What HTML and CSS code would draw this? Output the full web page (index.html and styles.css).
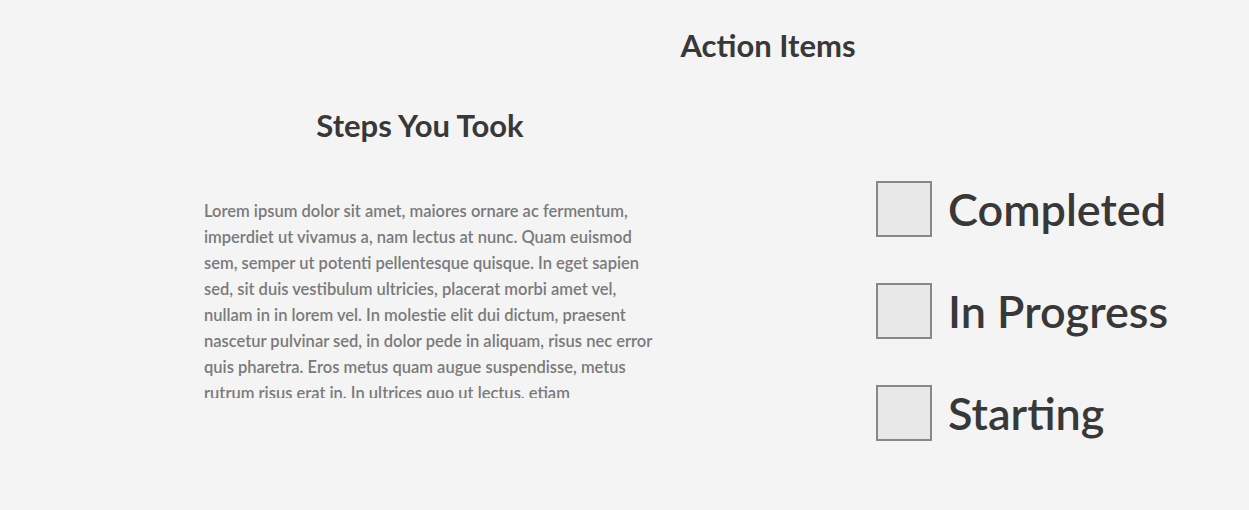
FILE: index.html
```html
<!DOCTYPE html>
<html lang="en">
<head>
<meta charset="utf-8">
<title>Action Items</title>
<link rel="stylesheet" href="styles.css">
</head>
<body>
<div class="page">
  <header class="header">
    <h1 class="title">Action Items</h1>
  </header>
  <main class="columns">
    <section class="steps">
      <h2 class="steps-title">Steps You Took</h2>
      <div class="steps-text">
        <p>Lorem ipsum dolor sit amet, maiores ornare ac fermentum, imperdiet ut vivamus a, nam lectus at nunc. Quam euismod sem, semper ut potenti pellentesque quisque. In eget sapien sed, sit duis vestibulum ultricies, placerat morbi amet vel, nullam in in lorem vel. In molestie elit dui dictum, praesent nascetur pulvinar sed, in dolor pede in aliquam, risus nec error quis pharetra. Eros metus quam augue suspendisse, metus rutrum risus erat in.  In ultrices quo ut lectus, etiam vestibulum urna a est, pretium luctus euismod nisl, pellentesque turpis hac ridiculus massa.</p>
      </div>
    </section>
    <section class="status">
      <ul class="status-list">
        <li class="status-item"><span class="box"></span><span class="label">Completed</span></li>
        <li class="status-item"><span class="box"></span><span class="label">In Progress</span></li>
        <li class="status-item"><span class="box"></span><span class="label">Starting</span></li>
      </ul>
    </section>
  </main>
</div>
</body>
</html>
```
FILE: styles.css
```css
html, body {
  margin: 0;
  padding: 0;
  background: #f4f4f4;
}
body {
  font-family: Lato, "Open Sans", "Noto Sans", sans-serif;
  color: #383838;
}
.page {
  width: 1249px;
  height: 510px;
  overflow: hidden;
}
.header {
  padding-left: 287px;
  text-align: center;
  padding-top: 27px;
}
.title {
  margin: 0;
  font-size: 31px;
  font-weight: 700;
  line-height: 36px;
  color: #383838;
}
.columns {
  display: flex;
}
.steps {
  padding-left: 204px;
  width: 449px;
  padding-top: 44px;
}
.steps-title {
  margin: 0 17px 0 0;
  text-align: center;
  font-size: 31px;
  font-weight: 700;
  line-height: 36px;
  color: #383838;
}
.steps-text {
  margin-top: 55px;
  height: 200px;
  overflow: hidden;
}
.steps-text p {
  margin: 0;
  font-size: 16.5px;
  line-height: 26px;
  color: #7a7a7a;
  font-weight: 600;
}
.status {
  margin-left: 223px;
  padding-top: 118px;
}
.status-list {
  list-style: none;
  margin: 0;
  padding: 0;
  display: flex;
  flex-direction: column;
  gap: 46px;
}
.status-item {
  display: flex;
  align-items: center;
  gap: 16px;
  height: 56px;
}
.box {
  width: 52px;
  height: 52px;
  border: 2px solid #888;
  background: #e8e8e8;
  flex: none;
}
.label {
  font-size: 45px;
  font-weight: 600;
  color: #383838;
  line-height: 56px;
}
```
